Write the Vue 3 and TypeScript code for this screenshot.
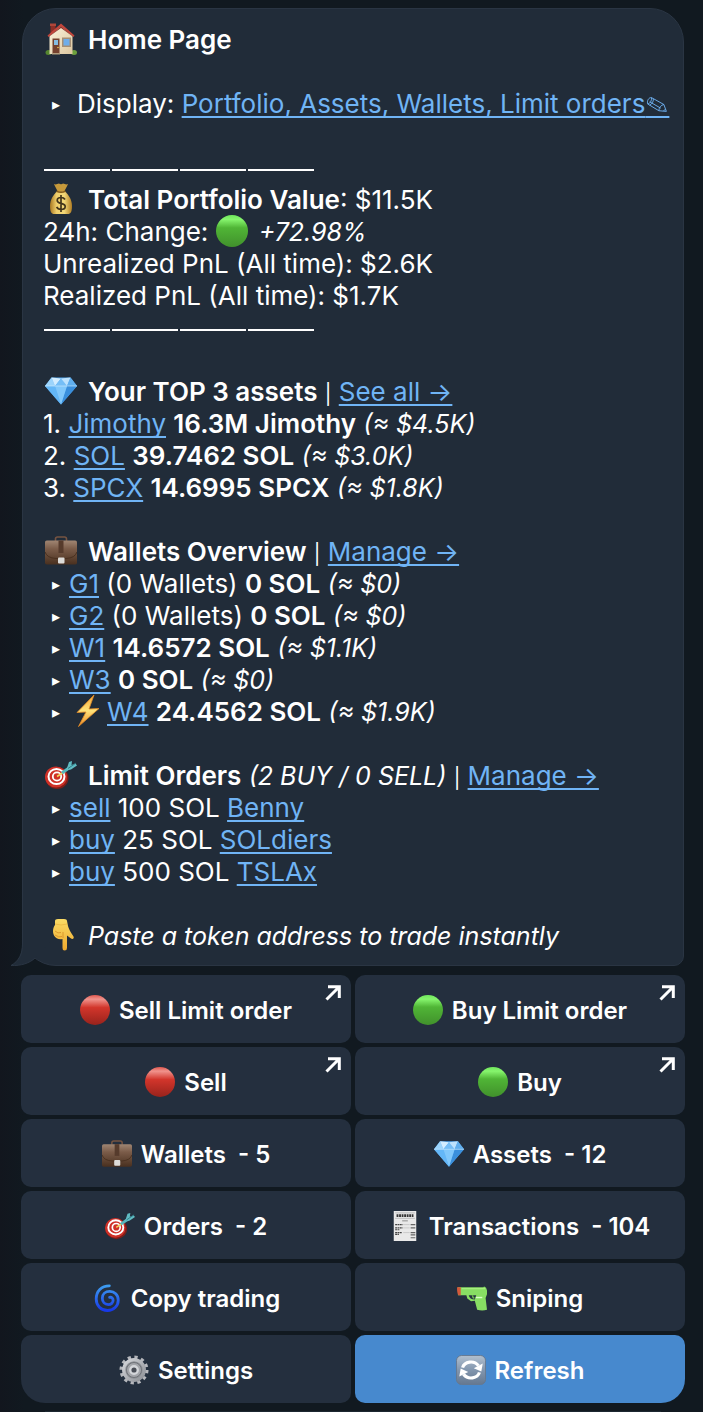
<script setup lang="ts">
interface Asset { name: string; amount: string; value: string }
interface Wallet { name: string; note?: string; amount: string; value: string; active?: boolean }
interface Order { side: string; amount: string; token: string }
interface Action { icon: string; label: string; external?: boolean; primary?: boolean }

const assets: Asset[] = [
  { name: 'Jimothy', amount: '16.3M Jimothy', value: '$4.5K' },
  { name: 'SOL', amount: '39.7462 SOL', value: '$3.0K' },
  { name: 'SPCX', amount: '14.6995 SPCX', value: '$1.8K' },
]

const wallets: Wallet[] = [
  { name: 'G1', note: '(0 Wallets)', amount: '0 SOL', value: '$0' },
  { name: 'G2', note: '(0 Wallets)', amount: '0 SOL', value: '$0' },
  { name: 'W1', amount: '14.6572 SOL', value: '$1.1K' },
  { name: 'W3', amount: '0 SOL', value: '$0' },
  { name: 'W4', amount: '24.4562 SOL', value: '$1.9K', active: true },
]

const orders: Order[] = [
  { side: 'sell', amount: '100 SOL', token: 'Benny' },
  { side: 'buy', amount: '25 SOL', token: 'SOLdiers' },
  { side: 'buy', amount: '500 SOL', token: 'TSLAx' },
]

const actions: Action[] = [
  { icon: 'red', label: 'Sell Limit order', external: true },
  { icon: 'green', label: 'Buy Limit order', external: true },
  { icon: 'red', label: 'Sell', external: true },
  { icon: 'green', label: 'Buy', external: true },
  { icon: 'briefcase', label: 'Wallets  - 5' },
  { icon: 'gem', label: 'Assets  - 12' },
  { icon: 'target', label: 'Orders  - 2' },
  { icon: 'receipt', label: 'Transactions  - 104' },
  { icon: 'cyclone', label: 'Copy trading' },
  { icon: 'pistol', label: 'Sniping' },
  { icon: 'gear', label: 'Settings' },
  { icon: 'refresh', label: 'Refresh', primary: true },
]
</script>

<template>
  <svg class="sprite" aria-hidden="true">
    <defs>
      <linearGradient id="g-green" x1="0" y1="0" x2="0" y2="1">
        <stop offset="0" stop-color="#6fe75c" /><stop offset=".14" stop-color="#86f56d" /><stop offset=".4" stop-color="#50b536" /><stop offset="1" stop-color="#41912c" />
      </linearGradient>
      <linearGradient id="g-red" x1="0" y1="0" x2="0" y2="1">
        <stop offset="0" stop-color="#e0584f" /><stop offset=".14" stop-color="#f0938c" /><stop offset=".42" stop-color="#d2352b" /><stop offset="1" stop-color="#98231c" />
      </linearGradient>
      <linearGradient id="g-case" x1="0" y1="0" x2="0" y2="1">
        <stop offset="0" stop-color="#a08673" /><stop offset=".35" stop-color="#7b5c49" /><stop offset="1" stop-color="#49301f" />
      </linearGradient>
      <linearGradient id="g-gold" x1="0" y1="0" x2="1" y2="0">
        <stop offset="0" stop-color="#a87822" /><stop offset=".3" stop-color="#f0cf6c" /><stop offset=".65" stop-color="#f3d878" /><stop offset="1" stop-color="#b07d24" />
      </linearGradient>
      <linearGradient id="g-wall" x1="0" y1="0" x2="1" y2="1">
        <stop offset="0" stop-color="#fbf3dc" /><stop offset="1" stop-color="#ddc7a0" />
      </linearGradient>
      <linearGradient id="g-hand" x1="0" y1="0" x2="0" y2="1">
        <stop offset="0" stop-color="#fbdc65" /><stop offset="1" stop-color="#efa92e" />
      </linearGradient>
      <linearGradient id="g-spiral" x1="0" y1="0" x2="0" y2="1">
        <stop offset="0" stop-color="#3d9cf0" /><stop offset="1" stop-color="#1739e8" />
      </linearGradient>
      <linearGradient id="g-steel" x1="0" y1="0" x2="1" y2="1">
        <stop offset="0" stop-color="#d4d6da" /><stop offset="1" stop-color="#8d9096" />
      </linearGradient>
      <linearGradient id="g-tile" x1="0" y1="0" x2="0" y2="1">
        <stop offset="0" stop-color="#b2c0cf" /><stop offset=".5" stop-color="#8296ae" /><stop offset="1" stop-color="#657890" />
      </linearGradient>
      <linearGradient id="g-bolt" x1="0" y1="0" x2="0" y2="1">
        <stop offset="0" stop-color="#f7a536" /><stop offset=".5" stop-color="#ffe37a" /><stop offset="1" stop-color="#f08a24" />
      </linearGradient>
    </defs>
    <symbol id="i-green" viewBox="0 0 32 32"><circle cx="16" cy="16" r="16" fill="url(#g-green)" /></symbol>
    <symbol id="i-red" viewBox="0 0 32 32"><circle cx="16" cy="16" r="16" fill="url(#g-red)" /></symbol>
    <symbol id="i-house" viewBox="0 0 32 32">
      <path d="M5.500 1h5v10h-5z" fill="#8e2f27" /><path d="M5 .5h6V3H5z" fill="#b0463a" />
      <ellipse cx="3.500" cy="29.500" rx="3" ry="2.500" fill="#55862f" /><ellipse cx="29" cy="29.500" rx="3" ry="2.500" fill="#6ca03d" />
      <path d="M4.500 13 16 3l11.500 10v18h-23z" fill="url(#g-wall)" />
      <path d="M16 .5 2.500 12.500l1 1.500L16 3.500l12.500 10.500 1-1.500z" fill="#c3453b" /><path d="m3.500 14 12.500-10.500 12.500 10.500-12.500-9z" fill="#8a2c25" />
      <path d="M7.500 15.500h7V31h-7z" fill="#75412e" /><path d="M9 17h4v5H9z" fill="#86bde2" /><circle cx="13" cy="24.500" r=".8" fill="#f1ca53" />
      <path d="M17 14.500h9v9.500h-9z" fill="#a68f75" /><path d="M18.500 16h6v6.500h-6z" fill="#6fadea" /><path d="M7 30h8v1.500H7z" fill="#b49d7c" />
    </symbol>
    <symbol id="i-money" viewBox="0 0 32 32">
      <path d="M9 1c2 1 3 0 5-.5 1 1 3 1 4 0 2 .5 3 1.500 5 .5-1 3-3 5-3.500 7.500h-7C12 6 10 4 9 1z" fill="#c79a3b" />
      <path d="M12.500 8h7C24 12 27 17 27 23c0 6-1.500 8-4 8H9c-2.500 0-4-2-4-8C5 17 8 12 12.500 8z" fill="url(#g-gold)" />
      <path d="M11.500 8.200q4.500 1.800 9 0" fill="none" stroke="#865c1a" stroke-width="1.600" />
      <path d="M20 16.500c-.8-1.500-2.200-2-4-2-2.200 0-3.800 1-3.800 2.900 0 4.200 8 1.800 8 6 0 2-1.700 3-4.200 3-2.200 0-3.700-.9-4.300-2.500M16 12v17" fill="none" stroke="#43351c" stroke-width="1.700" />
    </symbol>
    <symbol id="i-gem" viewBox="0 0 32 32">
      <path d="M6.500 2.500h19L32 11 16 29.500 0 11z" fill="#55aaf3" />
      <path d="M0 11h10l6 18.500z" fill="#64b7f7" /><path d="M22 11h10L16 29.500z" fill="#3a8fdc" /><path d="M10 11h12l-6 18.500z" fill="#81c8fb" />
      <path d="m6.500 2.500 3.500 8.500H0z" fill="#9cd4fb" /><path d="m6.500 2.500 9.500 1-6 7.500z" fill="#d3edff" /><path d="m16 3.500 6 7.500H10z" fill="#75bef6" /><path d="m16 3.500 9.500-1L22 11z" fill="#bde2fd" /><path d="M25.500 2.500 32 11H22z" fill="#60aeed" />
      <path d="M0 11h32" stroke="#d5efff" stroke-width=".6" />
    </symbol>
    <symbol id="i-briefcase" viewBox="0 0 32 32">
      <path d="M10.500 6V4q0-2 2-2h7q2 0 2 2v2" fill="none" stroke="#765442" stroke-width="1.600" />
      <rect y="5.500" width="32" height="24" rx="1.800" fill="url(#g-case)" />
      <path d="M0 17q2 6 11 6.500h10q9-.5 11-6.500" fill="none" stroke="#49301f" stroke-width="1" />
      <path d="M13.500 5.500h5V18h-5z" fill="#563b2c" /><rect x="13" y="22.500" width="6.500" height="6" rx="1" fill="#dddcd9" />
    </symbol>
    <symbol id="i-bolt" viewBox="0 0 32 32"><path d="M22 0 5 17.500l9-.5L6.500 31.500 27 13.500l-10 .5z" fill="url(#g-bolt)" stroke="#e48d27" stroke-width=".8" /></symbol>
    <symbol id="i-target" viewBox="0 0 32 32">
      <ellipse cx="12" cy="19" rx="11.500" ry="11" fill="#7f1d18" /><ellipse cx="11" cy="18" rx="11" ry="10.500" fill="#cf3027" />
      <ellipse cx="11.500" cy="17.500" rx="8" ry="7.600" fill="none" stroke="#fff" stroke-width="2" /><circle cx="12" cy="17.500" r="4.200" fill="none" stroke="#fff" stroke-width="1.800" />
      <path d="m12 17.500 7-4.500" stroke="#f1d35b" stroke-width="1.500" />
      <path d="m17 14 9-6.500" stroke="#55b6bb" stroke-width="3" /><path d="m22 9 2-6 3-1-.5 4 4-1.500 1.500 2-6 4-5 1z" fill="#60bcc4" /><path d="m23 9.500 8-5.500" stroke="#2c7780" stroke-width=".9" />
    </symbol>
    <symbol id="i-hand" viewBox="-2 0 32 32">
      <path d="M8 2q0-2 3-2h6q3 0 3 2l1 5q1 4 5.500 10.500c1 2-1 3.500-2.800 1.800L20 16.500V29q0 2.500-2.300 2.500T15.500 29V20c-3 1-7-.5-8.500-3.500C5 12 6.500 8 8 6z" fill="url(#g-hand)" />
      <path d="M8 12q3 3 6 1.500M8 16q4 3 7 1.500M16 19V13" fill="none" stroke="#d8942b" stroke-width=".9" />
      <path d="M8 5q6 2 12 0" fill="none" stroke="#eab843" stroke-width=".8" />
    </symbol>
    <symbol id="i-receipt" viewBox="0 0 32 32">
      <path d="M4 0h24v32H4z" fill="#e9e9e9" />
      <path d="M7 5h18" stroke="#343434" stroke-width="3" stroke-dasharray="2 .7" /><path d="M5.500 2h21M5.500 7.800h21" stroke="#999" stroke-width=".6" /><path d="M13 10.500h6" stroke="#888" />
      <path d="M5.500 14.500h8M5.500 18h8M5.500 20h5M5.500 23h7M5.500 25h4" stroke="#444" stroke-width="1.300" stroke-dasharray="2 .5" />
      <path d="M22 14.500h5M22 18h5M22 23h5M22 28.500h5M22 25.500h5" stroke="#666" stroke-width="1.200" /><path d="M14 14.500h7M14 18h7M14 23h7" stroke="#bbb" stroke-width=".7" />
    </symbol>
    <symbol id="i-cyclone" viewBox="0 0 32 32">
      <path d="M18.500 3C10 3 4.500 9 4.500 17c0 7 5 12.300 12 12.300 6.500 0 11.500-4.800 11.500-11C28 12.500 23.800 9 19 9c-4.800 0-8 3-8 7.300 0 4 2.800 6.700 6.300 6.700 3.200 0 5.200-2 5.200-4.500 0-2.400-1.800-3.600-3.700-3.200" fill="none" stroke="url(#g-spiral)" stroke-width="3" stroke-linecap="round" />
    </symbol>
    <symbol id="i-pistol" viewBox="0 0 32 32">
      <path d="M1 4.500h27l1-.8 2 1.300 1 3v4l-1.500 4L32 28.500q-5 1.500-10.500 0L19 19l-4 .5-4-3-1-3.500H1z" fill="#88df63" />
      <path d="M12.500 13q1 4.500 6.500 4.500l1.500-4.500z" fill="#263241" /><path d="M16.500 13q0 2.500 2 3.500" fill="none" stroke="#6fbf50" stroke-width="1.500" />
      <path d="M0 4.500h4V13H1.500Q0 11 0 4.500z" fill="#d3593a" /><path d="M5 6h25" stroke="#a8ef81" stroke-width="1.200" /><path d="M20 15.500h7" stroke="#d8ffc6" stroke-width="1.500" />
    </symbol>
    <symbol id="i-gear" viewBox="0 0 32 32">
      <circle cx="16" cy="16" r="13.500" fill="none" stroke="#b5b7bc" stroke-width="4" stroke-dasharray="3.400 3.668" />
      <circle cx="16" cy="16" r="11" fill="#8c8f94" stroke="url(#g-steel)" stroke-width="3.500" /><circle cx="16" cy="16" r="8" fill="#a3a5aa" stroke="#6d7076" stroke-width="1" />
      <circle cx="16" cy="16" r="4" fill="#4a4e57" stroke="#d4d6da" stroke-width="2.500" />
    </symbol>
    <symbol id="i-refresh" viewBox="0 0 32 32">
      <rect x=".5" y=".5" width="31" height="31" rx="5.500" fill="url(#g-tile)" stroke="#66798f" />
      <path d="M7 13.500C9 7 19 5 24 11.500M25 18.500C23 25 13 27 8 20.500" fill="none" stroke="#fff" stroke-width="3.400" />
      <path d="m28.500 9-1.500 8.500L19 14zM3.500 23 5 14.500 13 18z" fill="#fff" />
    </symbol>
  </svg>

  <main class="chat">
    <article class="bubble">
      <svg class="tail" viewBox="0 0 48 48" aria-hidden="true">
        <path class="tail-fill" d="M12 0v24C12 34 9 41 1 45.500 11 46 20 43 25 38L40 22V0z" />
        <path class="tail-line" d="M12.500 0v24C12.500 34 9 41 1 45.500 11 46 20 43 25 38" />
      </svg>

      <section>
        <h1><svg class="emoji"><use href="#i-house" /></svg>Home Page</h1>
      </section>

      <section>
        <p class="display"><span class="bullet">▸</span>Display: <a href="#display">Portfolio, Assets, Wallets, Limit orders<span class="pencil">&emsp;<svg viewBox="0 0 24 18" aria-hidden="true"><path d="M6 1.500 19.500 9l2.700 7.500-8.200-.7L2 8.500C.5 5.500 3 1 6 1.500zM2 8.500C4.500 8 6.500 4.500 6 1.500M4 6l12 7M14 15.800c0-3.300 2.500-6.300 5.500-6.800M19 16.200l2.200-2.200M8 2.800C8.300 6 6.500 8.600 4 9.700" /></svg></span></a></p>
      </section>

      <section>
        <div class="rule"><i v-for="n in 4" :key="n" /></div>
        <p><svg class="emoji"><use href="#i-money" /></svg><b>Total Portfolio Value</b>: $11.5K</p>
        <p>24h: Change: <svg class="emoji dot"><use href="#i-green" /></svg><em>+72.98%</em></p>
        <p>Unrealized PnL (All time): $2.6K</p>
        <p>Realized PnL (All time): $1.7K</p>
        <div class="rule"><i v-for="n in 4" :key="n" /></div>
      </section>

      <section>
        <p><svg class="emoji"><use href="#i-gem" /></svg><b>Your TOP 3 assets</b> <span class="bar">|</span> <a href="#assets">See all →</a></p>
        <p v-for="(a, i) in assets" :key="a.name">{{ i + 1 }}. <a href="#asset">{{ a.name }}</a> <b>{{ a.amount }}</b> <em>(≈ {{ a.value }})</em></p>
      </section>

      <section>
        <p><svg class="emoji"><use href="#i-briefcase" /></svg><b>Wallets Overview</b> <span class="bar">|</span> <a href="#wallets">Manage →</a></p>
        <p v-for="w in wallets" :key="w.name"><span class="bullet">▸</span><svg v-if="w.active" class="emoji bolt"><use href="#i-bolt" /></svg><a href="#wallet">{{ w.name }}</a> {{ w.note ? w.note + ' ' : '' }}<b>{{ w.amount }}</b> <em>(≈ {{ w.value }})</em></p>
      </section>

      <section>
        <p><svg class="emoji"><use href="#i-target" /></svg><b>Limit Orders</b> <em>(2 BUY / 0 SELL)</em> <span class="bar">|</span> <a href="#orders">Manage →</a></p>
        <p v-for="o in orders" :key="o.token"><span class="bullet">▸</span><a href="#order">{{ o.side }}</a> {{ o.amount }} <a href="#token">{{ o.token }}</a></p>
      </section>

      <section>
        <p><svg class="emoji"><use href="#i-hand" /></svg><em>Paste a token address to trade instantly</em></p>
      </section>
    </article>

    <div class="keyboard">
      <button v-for="a in actions" :key="a.label" type="button" :class="{ primary: a.primary }">
        <svg class="key-icon" aria-hidden="true"><use :href="'#i-' + a.icon" /></svg>
        <span>{{ a.label }}</span>
        <svg v-if="a.external" class="external" viewBox="0 0 16 16" aria-hidden="true"><path d="M1.500 14.500 13 3M3 1.700h11.300V13" /></svg>
      </button>
    </div>
    <div class="next" />
  </main>
</template>

<style>
body {
  margin: 0;
  background: #111920;
}
</style>

<style scoped>
.sprite {
  position: absolute;
  width: 0;
  height: 0;
}
.chat {
  box-sizing: border-box;
  padding: 8px 18px 0 21px;
  overflow: hidden;
  background: linear-gradient(90deg, #12161e 0, #111920 24px, #111920 100%);
  color: #fff;
  font: 26px/32px Inter, "DejaVu Sans", sans-serif;
}
.bubble {
  position: relative;
  display: flex;
  flex-direction: column;
  gap: 32px;
  margin: 0 1px;
  padding: 15px 0 13px 20px;
  border: 1px solid #2a3543;
  border-radius: 34px 34px 10px 34px;
  background: #212c39;
  white-space: nowrap;
}
.tail {
  position: absolute;
  left: -13px;
  bottom: -3px;
  width: 48px;
  height: 48px;
}
.tail-fill {
  fill: #212c39;
}
.tail-line {
  fill: none;
  stroke: #2a3543;
}
h1,
p {
  height: 32px;
  margin: 0;
  font-size: 26px;
  font-weight: 400;
}
h1,
b {
  font-weight: 600;
}
em {
  font-size: 25px;
}
a {
  color: #70b4f5;
  text-decoration: underline;
  text-decoration-thickness: 2px;
  text-underline-offset: 3px;
  text-decoration-skip-ink: none;
}
.bar {
  font-size: 20px;
}
.emoji {
  width: 32px;
  height: 32px;
  margin: -4px 11px -4px 2px;
  vertical-align: -2px;
}
.dot {
  margin-left: 0;
}
.bolt {
  margin-left: 3px;
  margin-right: 3px;
}
.bullet {
  display: inline-block;
  width: 26px;
  text-align: center;
  font: 16px/20px "DejaVu Sans", sans-serif;
  vertical-align: 3px;
}
.display .bullet {
  margin-right: 8px;
}
.pencil {
  position: relative;
  font-size: 24px;
}
.pencil svg {
  position: absolute;
  left: 1px;
  bottom: 6px;
  width: 22px;
  height: 17px;
  fill: none;
  stroke: currentColor;
}
.rule {
  display: flex;
  gap: 2px;
  align-items: center;
  height: 32px;
  padding-left: 1px;
}
.rule i {
  width: 66px;
  height: 2px;
  margin-top: 4px;
  background: #fff;
}
.keyboard {
  display: grid;
  grid-template-columns: 1fr 1fr;
  gap: 4px;
  margin-top: 9px;
}
button {
  position: relative;
  display: flex;
  align-items: center;
  justify-content: center;
  gap: 9px;
  height: 68px;
  padding: 2px 0 0;
  border: 0;
  border-radius: 10px;
  background: #242f3e;
  color: #fff;
  font: 600 24px/32px Inter, "DejaVu Sans", sans-serif;
  white-space: pre;
}
button span {
  padding-top: 2px;
}
button:nth-last-child(2) {
  border-bottom-left-radius: 24px;
}
button:last-child {
  border-bottom-right-radius: 24px;
}
.primary {
  background: #4789ce;
}
.key-icon {
  width: 30px;
  height: 30px;
}
.external {
  position: absolute;
  top: 10px;
  right: 10px;
  width: 16px;
  height: 16px;
  fill: none;
  stroke: #fff;
  stroke-width: 3;
}
.next {
  height: 1px;
  margin: 8px 24px 0;
  background: #1c2731;
}
</style>
